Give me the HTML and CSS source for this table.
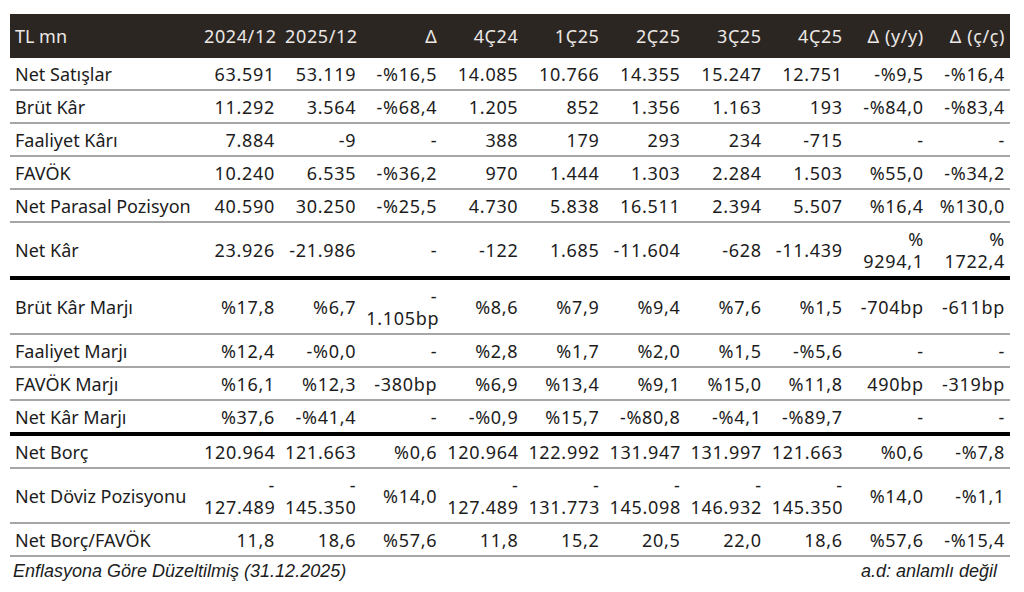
FILE: index.html
```html
<!DOCTYPE html>
<html lang="tr">
<head>
<meta charset="utf-8">
<title>Özet Finansallar</title>
<link rel="stylesheet" href="styles.css">
</head>
<body>
<div class="page">
  <table class="fin">
    <colgroup>
      <col class="c-label">
      <col span="10" class="c-num">
    </colgroup>
    <thead>
      <tr>
        <th class="lbl">TL mn</th>
        <th>2024/12</th><th>2025/12</th><th>Δ</th><th>4Ç24</th><th>1Ç25</th><th>2Ç25</th><th>3Ç25</th><th>4Ç25</th><th>Δ (y/y)</th><th>Δ (ç/ç)</th>
      </tr>
    </thead>
    <tbody>
      <tr>
        <td class="lbl">Net Satışlar</td>
        <td>63.591</td><td>53.119</td><td>-%16,5</td><td>14.085</td><td>10.766</td><td>14.355</td><td>15.247</td><td>12.751</td><td>-%9,5</td><td>-%16,4</td>
      </tr>
      <tr>
        <td class="lbl">Brüt Kâr</td>
        <td>11.292</td><td>3.564</td><td>-%68,4</td><td>1.205</td><td>852</td><td>1.356</td><td>1.163</td><td>193</td><td>-%84,0</td><td>-%83,4</td>
      </tr>
      <tr>
        <td class="lbl">Faaliyet Kârı</td>
        <td>7.884</td><td>-9</td><td>-</td><td>388</td><td>179</td><td>293</td><td>234</td><td>-715</td><td>-</td><td>-</td>
      </tr>
      <tr>
        <td class="lbl">FAVÖK</td>
        <td>10.240</td><td>6.535</td><td>-%36,2</td><td>970</td><td>1.444</td><td>1.303</td><td>2.284</td><td>1.503</td><td>%55,0</td><td>-%34,2</td>
      </tr>
      <tr>
        <td class="lbl">Net Parasal Pozisyon</td>
        <td>40.590</td><td>30.250</td><td>-%25,5</td><td>4.730</td><td>5.838</td><td>16.511</td><td>2.394</td><td>5.507</td><td>%16,4</td><td>%130,0</td>
      </tr>
      <tr class="thick">
        <td class="lbl">Net Kâr</td>
        <td>23.926</td><td>-21.986</td><td>-</td><td>-122</td><td>1.685</td><td>-11.604</td><td>-628</td><td>-11.439</td><td>%<br>9294,1</td><td>%<br>1722,4</td>
      </tr>
      <tr>
        <td class="lbl">Brüt Kâr Marjı</td>
        <td>%17,8</td><td>%6,7</td><td>-<br>1.105bp</td><td>%8,6</td><td>%7,9</td><td>%9,4</td><td>%7,6</td><td>%1,5</td><td>-704bp</td><td>-611bp</td>
      </tr>
      <tr>
        <td class="lbl">Faaliyet Marjı</td>
        <td>%12,4</td><td>-%0,0</td><td>-</td><td>%2,8</td><td>%1,7</td><td>%2,0</td><td>%1,5</td><td>-%5,6</td><td>-</td><td>-</td>
      </tr>
      <tr>
        <td class="lbl">FAVÖK Marjı</td>
        <td>%16,1</td><td>%12,3</td><td>-380bp</td><td>%6,9</td><td>%13,4</td><td>%9,1</td><td>%15,0</td><td>%11,8</td><td>490bp</td><td>-319bp</td>
      </tr>
      <tr class="thick">
        <td class="lbl">Net Kâr Marjı</td>
        <td>%37,6</td><td>-%41,4</td><td>-</td><td>-%0,9</td><td>%15,7</td><td>-%80,8</td><td>-%4,1</td><td>-%89,7</td><td>-</td><td>-</td>
      </tr>
      <tr>
        <td class="lbl">Net Borç</td>
        <td>120.964</td><td>121.663</td><td>%0,6</td><td>120.964</td><td>122.992</td><td>131.947</td><td>131.997</td><td>121.663</td><td>%0,6</td><td>-%7,8</td>
      </tr>
      <tr>
        <td class="lbl">Net Döviz Pozisyonu</td>
        <td>-<br>127.489</td><td>-<br>145.350</td><td>%14,0</td><td>-<br>127.489</td><td>-<br>131.773</td><td>-<br>145.098</td><td>-<br>146.932</td><td>-<br>145.350</td><td>%14,0</td><td>-%1,1</td>
      </tr>
      <tr>
        <td class="lbl">Net Borç/FAVÖK</td>
        <td>11,8</td><td>18,6</td><td>%57,6</td><td>11,8</td><td>15,2</td><td>20,5</td><td>22,0</td><td>18,6</td><td>%57,6</td><td>-%15,4</td>
      </tr>
    </tbody>
  </table>
  <div class="foot">
    <span class="note">Enflasyona Göre Düzeltilmiş (31.12.2025)</span>
    <span class="note">a.d: anlamlı değil</span>
  </div>
</div>
</body>
</html>
```

FILE: styles.css
```css
html, body {
  margin: 0;
  padding: 0;
  background: #ffffff;
}

.page {
  padding: 14px 14px 0 10px;
  width: 1000px;
}

.fin {
  width: 1000px;
  table-layout: fixed;
  border-collapse: separate;
  border-spacing: 0;
  font-family: "Noto Sans", "DejaVu Sans", sans-serif;
  font-size: 18px;
  color: #1c1c1c;
}

.c-label { width: 189px; }
.c-num { width: 81.1px; }

.fin th {
  background: #2b2622;
  color: #ebe8e6;
  font-weight: normal;
  text-align: right;
  height: 44px;
  padding: 0 5px;
  line-height: 22px;
  letter-spacing: 0.6px;
  white-space: nowrap;
  vertical-align: middle;
}

.fin td {
  text-align: right;
  padding: 4.5px 5px;
  line-height: 22px;
  letter-spacing: 0.7px;
  white-space: nowrap;
  vertical-align: middle;
  border-bottom: 2px solid #a6a6a6;
}

.fin .lbl {
  text-align: left;
  letter-spacing: 0;
}

.fin tr.thick td {
  border-bottom: 4px solid #000000;
}

.foot {
  display: flex;
  justify-content: space-between;
  padding: 3px 13px 0 3px;
  font-family: "Liberation Sans", Arial, sans-serif;
  font-style: italic;
  font-size: 18px;
  line-height: 22px;
  color: #1c1c1c;
}
```
